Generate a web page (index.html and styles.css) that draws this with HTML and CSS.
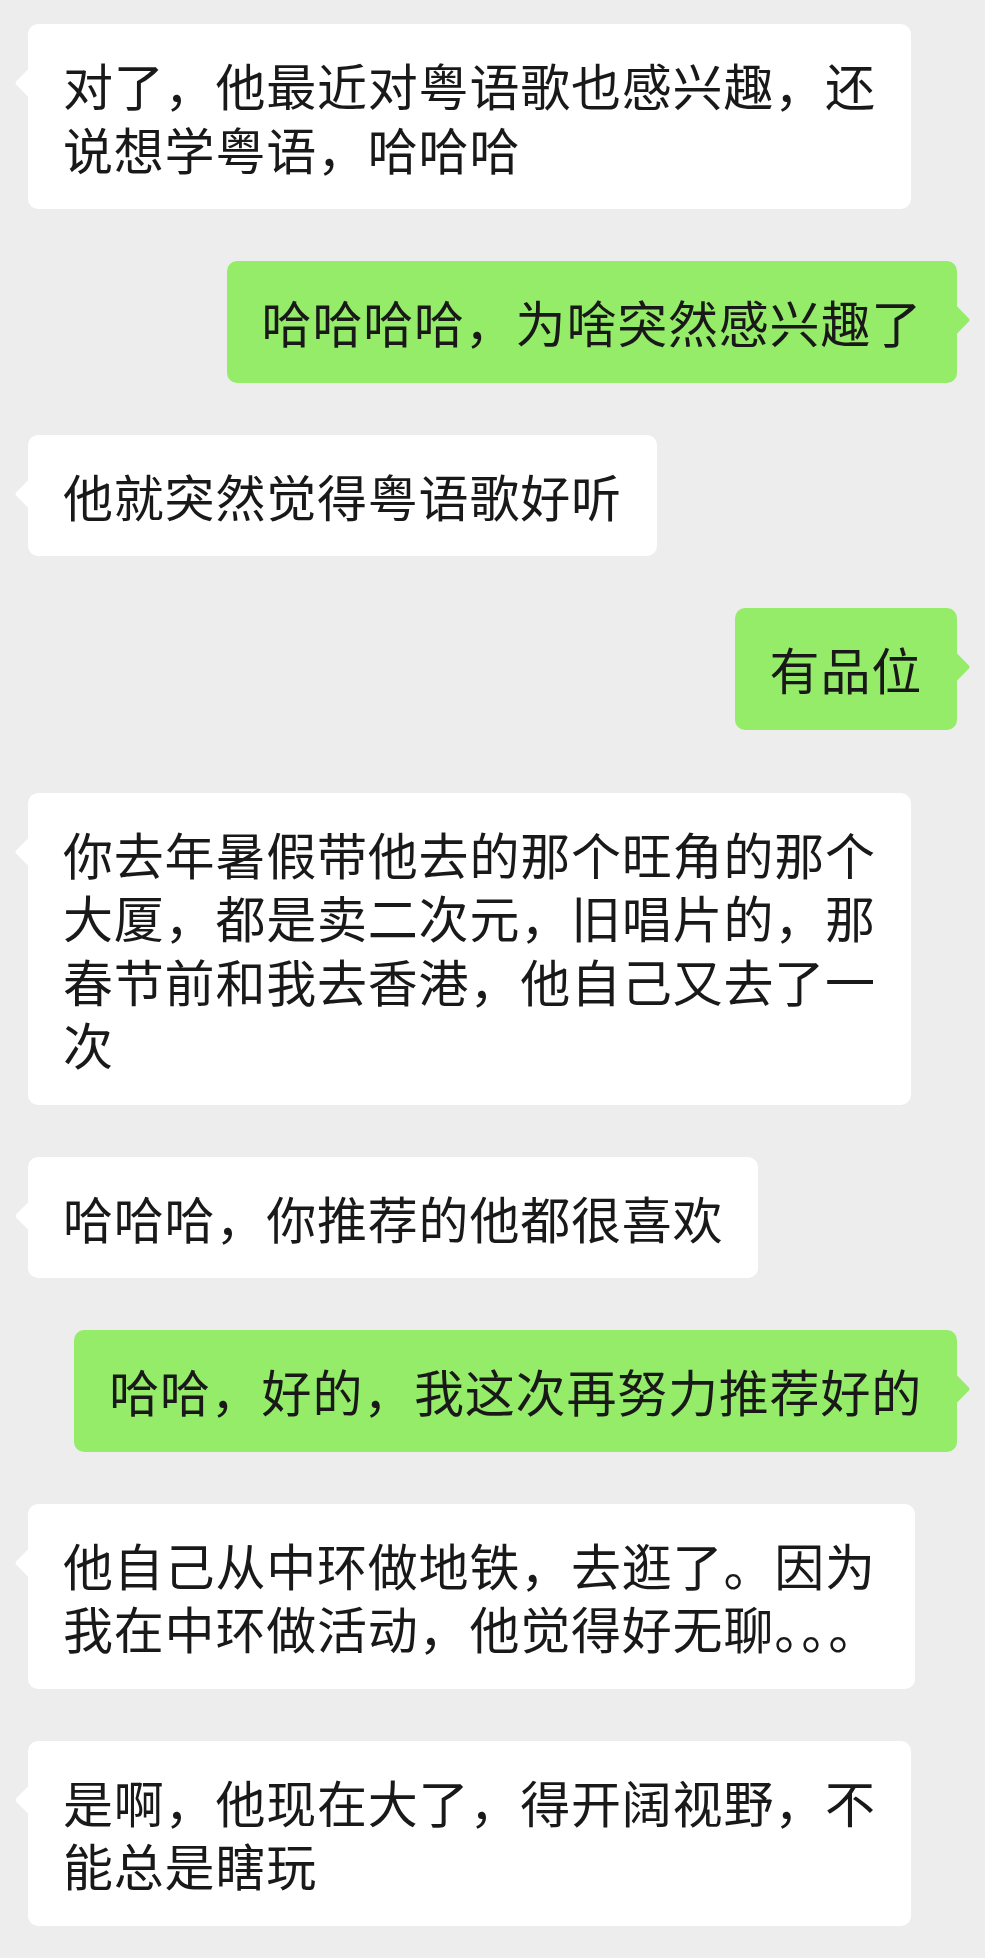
FILE: index.html
```html
<!DOCTYPE html>
<html lang="zh-CN">
<head>
<meta charset="utf-8">
<title>聊天记录</title>
<link rel="stylesheet" href="styles.css">
</head>
<body>
<div class="chat">
  <div class="bubble in">对了，他最近对粤语歌也感兴趣，还<br>说想学粤语，哈哈哈</div>
  <div class="bubble out">哈哈哈哈，为啥突然感兴趣了</div>
  <div class="bubble in">他就突然觉得粤语歌好听</div>
  <div class="bubble out">有品位</div>
  <div class="bubble in spaced">你去年暑假带他去的那个旺角的那个<br>大厦，都是卖二次元，旧唱片的，那<br>春节前和我去香港，他自己又去了一<br>次</div>
  <div class="bubble in">哈哈哈，你推荐的他都很喜欢</div>
  <div class="bubble out">哈哈，好的，我这次再努力推荐好的</div>
  <div class="bubble in">他自己从中环做地铁，去逛了。因为<br>我在中环做活动，他觉得好无聊<span class="squeeze">。。。</span></div>
  <div class="bubble in">是啊，他现在大了，得开阔视野，不<br>能总是瞎玩</div>
</div>
</body>
</html>
```
FILE: styles.css
```css
html, body {
  margin: 0;
  padding: 0;
  background: #ededed;
}

body {
  width: 985px;
  height: 1958px;
  overflow: hidden;
  font-family: "Noto Sans CJK SC", "Noto Sans", sans-serif;
  color: #191919;
}

.chat {
  display: flex;
  flex-direction: column;
  gap: 52px;
  padding: 24px 28px 0 28px;
}

.bubble {
  position: relative;
  box-sizing: border-box;
  max-width: 890px;
  padding: 29px 35px;
  border-radius: 10px;
  font-size: 50px;
  letter-spacing: 0.8px;
  line-height: 63.5px;
  white-space: nowrap;
}

.bubble::before {
  content: "";
  position: absolute;
  top: 48px;
  width: 22px;
  height: 22px;
  border-radius: 3px;
  transform: rotate(45deg);
  background: inherit;
}

.in {
  align-self: flex-start;
  background: #ffffff;
}

.in::before {
  left: -9px;
}

.out {
  align-self: flex-end;
  background: #95ec69;
}

.out::before {
  right: -9px;
}

.spaced {
  margin-top: 11px;
}

.squeeze {
  letter-spacing: 2px;
}
```
